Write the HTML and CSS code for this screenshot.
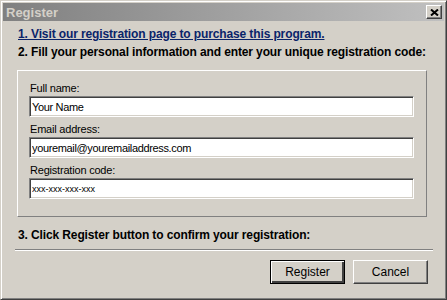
FILE: index.html
```html
<!DOCTYPE html>
<html lang="en">
<head>
  <meta charset="UTF-8" />
  <title>Register</title>
  <link rel="stylesheet" href="styles.css">
</head>
<body>

  <div class="window">
    <div class="titlebar">
      <span class="title">Register</span>
      <button class="close-btn" aria-label="Close">
        <svg width="9" height="7" viewBox="0 0 9 7">
          <path d="M1 0.5L8 6.5M8 0.5L1 6.5" stroke="#000" stroke-width="2" />
        </svg>
      </button>
    </div>

    <div class="content">
      <a class="step link" href="#">1. Visit our registration page to purchase this program.</a>
      <div class="step">2. Fill your personal information and enter your unique registration code:</div>

      <!-- Personal info group -->
      <div class="groupbox">
        <label for="fullname">Full name:</label>
        <input type="text" id="fullname" value="Your Name" />

        <label for="email">Email address:</label>
        <input type="text" id="email" value="youremail@youremailaddress.com" />

        <label for="code">Registration code:</label>
        <input type="text" id="code" class="code" value="xxx-xxx-xxx-xxx" />
      </div>

      <div class="step step3">3. Click Register button to confirm your registration:</div>
      <div class="separator"></div>

      <div class="buttons">
        <button class="btn default">Register</button>
        <button class="btn">Cancel</button>
      </div>
    </div>
  </div>

</body>
</html>
```

FILE: styles.css
```css
body {
  margin: 0;
  font-family: 'Liberation Sans', Arial, sans-serif;
  background: #d4d0c8;
}

.window {
  width: 447px;
  height: 300px;
  box-sizing: border-box;
  border: 1px solid;
  border-color: #d4d0c8 #404040 #404040 #d4d0c8;
  box-shadow: inset 1px 1px 0 #fff, inset -1px -1px 0 #808080;
  padding: 2px;
  background: #d4d0c8;
  display: flex;
  flex-direction: column;
}

.titlebar {
  height: 18px;
  flex-shrink: 0;
  display: flex;
  align-items: center;
  justify-content: space-between;
  padding: 0 2px 0 3px;
  background: linear-gradient(to right, #808080, #c0c0c0);
}

.title {
  color: #d4d0c8;
  font-weight: bold;
  font-size: 13px;
}

.close-btn {
  width: 16px;
  height: 14px;
  padding: 0;
  display: flex;
  align-items: center;
  justify-content: center;
  background: #d4d0c8;
  border: 1px solid;
  border-color: #fff #404040 #404040 #fff;
  box-shadow: inset -1px -1px 0 #808080;
}

.content {
  flex: 1;
  padding-top: 4px;
  display: flex;
  flex-direction: column;
}

.step {
  font-size: 12px;
  font-weight: bold;
  letter-spacing: -0.12px;
  white-space: nowrap;
  color: #000;
  line-height: 18px;
  margin-left: 15px;
}

.link {
  align-self: flex-start;
  color: #0a246a;
  text-decoration: underline;
}

.groupbox {
  margin: 9px 0 0 14px;
  width: 410px;
  height: 147px;
  box-sizing: border-box;
  border: 1px solid;
  border-color: #fff #808080 #808080 #fff;
  padding: 10px 12px 0 11px;
  display: flex;
  flex-direction: column;
}

.groupbox label {
  font-size: 11px;
  letter-spacing: -0.2px;
  line-height: 14px;
  margin: 0 0 1px 1px;
  color: #000;
}

.groupbox input {
  height: 21px;
  box-sizing: border-box;
  margin: 0 0 5px;
  padding: 0 2px;
  border: 1px solid;
  border-color: #808080 #fff #fff #808080;
  box-shadow: inset 1px 1px 0 #404040, inset -1px -1px 0 #d4d0c8;
  font-family: 'Liberation Sans', Arial, sans-serif;
  font-size: 11px;
  letter-spacing: -0.35px;
  color: #000;
  background: #fff;
  outline: none;
}

.groupbox input.code {
  font-size: 9px;
  letter-spacing: 0;
}

.step3 {
  margin-top: 9px;
}

.separator {
  margin: 5px 0 0 12px;
  width: 418px;
  height: 1px;
  flex-shrink: 0;
  background: #808080;
  border-bottom: 1px solid #fff;
}

.buttons {
  display: flex;
  justify-content: flex-end;
  gap: 8px;
  margin: 9px 16px 0 0;
}

.btn {
  width: 75px;
  height: 24px;
  box-sizing: border-box;
  font-family: 'Liberation Sans', Arial, sans-serif;
  font-size: 12px;
  color: #000;
  background: #d4d0c8;
  border: 1px solid;
  border-color: #fff #404040 #404040 #fff;
  box-shadow: inset -1px -1px 0 #808080;
}

.btn.default {
  border-color: #000;
  box-shadow: inset 1px 1px 0 #fff, inset -2px -2px 0 #404040;
}
```
